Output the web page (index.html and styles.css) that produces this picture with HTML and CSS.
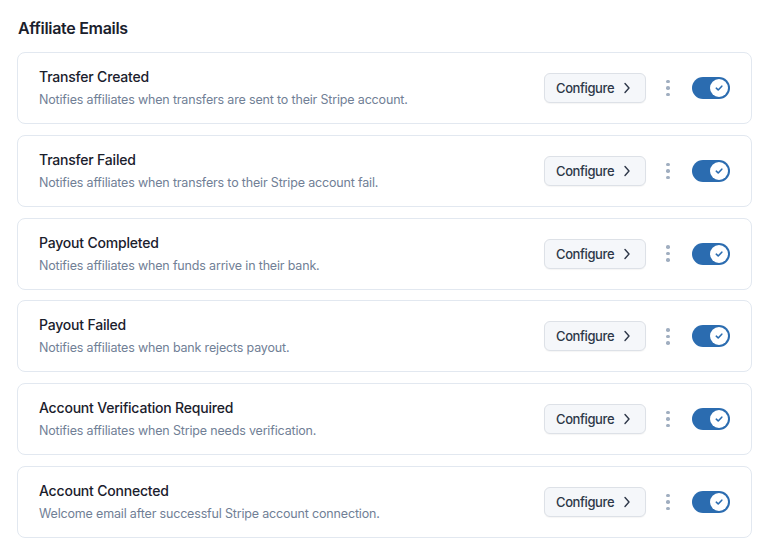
FILE: index.html
```html
<!DOCTYPE html>
<html>
<head>
<meta charset="utf-8">
<link rel="stylesheet" href="styles.css">
</head>
<body>
<div class="page">
  <h2 class="heading">Affiliate Emails</h2>
  <div class="list">
    <div class="card">
      <div class="info">
        <div class="title">Transfer Created</div>
        <div class="desc">Notifies affiliates when transfers are sent to their Stripe account.</div>
      </div>
      <div class="actions">
        <button class="btn"><span>Configure</span><svg class="chev" viewBox="0 0 8 12"><path d="M2 1.5 6 6 2 10.5" fill="none" stroke="currentColor" stroke-width="1.4" stroke-linecap="round" stroke-linejoin="round"/></svg></button>
        <span class="kebab"><i></i><i></i><i></i></span>
        <span class="toggle"><span class="knob"><svg viewBox="0 0 12 12"><path d="M3.3 6.2 5.2 8 8.8 4.2" fill="none" stroke="currentColor" stroke-width="1.6" stroke-linecap="round" stroke-linejoin="round"/></svg></span></span>
      </div>
    </div>
    <div class="card">
      <div class="info">
        <div class="title">Transfer Failed</div>
        <div class="desc">Notifies affiliates when transfers to their Stripe account fail.</div>
      </div>
      <div class="actions">
        <button class="btn"><span>Configure</span><svg class="chev" viewBox="0 0 8 12"><path d="M2 1.5 6 6 2 10.5" fill="none" stroke="currentColor" stroke-width="1.4" stroke-linecap="round" stroke-linejoin="round"/></svg></button>
        <span class="kebab"><i></i><i></i><i></i></span>
        <span class="toggle"><span class="knob"><svg viewBox="0 0 12 12"><path d="M3.3 6.2 5.2 8 8.8 4.2" fill="none" stroke="currentColor" stroke-width="1.6" stroke-linecap="round" stroke-linejoin="round"/></svg></span></span>
      </div>
    </div>
    <div class="card">
      <div class="info">
        <div class="title">Payout Completed</div>
        <div class="desc">Notifies affiliates when funds arrive in their bank.</div>
      </div>
      <div class="actions">
        <button class="btn"><span>Configure</span><svg class="chev" viewBox="0 0 8 12"><path d="M2 1.5 6 6 2 10.5" fill="none" stroke="currentColor" stroke-width="1.4" stroke-linecap="round" stroke-linejoin="round"/></svg></button>
        <span class="kebab"><i></i><i></i><i></i></span>
        <span class="toggle"><span class="knob"><svg viewBox="0 0 12 12"><path d="M3.3 6.2 5.2 8 8.8 4.2" fill="none" stroke="currentColor" stroke-width="1.6" stroke-linecap="round" stroke-linejoin="round"/></svg></span></span>
      </div>
    </div>
    <div class="card">
      <div class="info">
        <div class="title">Payout Failed</div>
        <div class="desc">Notifies affiliates when bank rejects payout.</div>
      </div>
      <div class="actions">
        <button class="btn"><span>Configure</span><svg class="chev" viewBox="0 0 8 12"><path d="M2 1.5 6 6 2 10.5" fill="none" stroke="currentColor" stroke-width="1.4" stroke-linecap="round" stroke-linejoin="round"/></svg></button>
        <span class="kebab"><i></i><i></i><i></i></span>
        <span class="toggle"><span class="knob"><svg viewBox="0 0 12 12"><path d="M3.3 6.2 5.2 8 8.8 4.2" fill="none" stroke="currentColor" stroke-width="1.6" stroke-linecap="round" stroke-linejoin="round"/></svg></span></span>
      </div>
    </div>
    <div class="card">
      <div class="info">
        <div class="title">Account Verification Required</div>
        <div class="desc">Notifies affiliates when Stripe needs verification.</div>
      </div>
      <div class="actions">
        <button class="btn"><span>Configure</span><svg class="chev" viewBox="0 0 8 12"><path d="M2 1.5 6 6 2 10.5" fill="none" stroke="currentColor" stroke-width="1.4" stroke-linecap="round" stroke-linejoin="round"/></svg></button>
        <span class="kebab"><i></i><i></i><i></i></span>
        <span class="toggle"><span class="knob"><svg viewBox="0 0 12 12"><path d="M3.3 6.2 5.2 8 8.8 4.2" fill="none" stroke="currentColor" stroke-width="1.6" stroke-linecap="round" stroke-linejoin="round"/></svg></span></span>
      </div>
    </div>
    <div class="card">
      <div class="info">
        <div class="title">Account Connected</div>
        <div class="desc">Welcome email after successful Stripe account connection.</div>
      </div>
      <div class="actions">
        <button class="btn"><span>Configure</span><svg class="chev" viewBox="0 0 8 12"><path d="M2 1.5 6 6 2 10.5" fill="none" stroke="currentColor" stroke-width="1.4" stroke-linecap="round" stroke-linejoin="round"/></svg></button>
        <span class="kebab"><i></i><i></i><i></i></span>
        <span class="toggle"><span class="knob"><svg viewBox="0 0 12 12"><path d="M3.3 6.2 5.2 8 8.8 4.2" fill="none" stroke="currentColor" stroke-width="1.6" stroke-linecap="round" stroke-linejoin="round"/></svg></span></span>
      </div>
    </div>
  </div>
</div>
</body>
</html>
```
FILE: styles.css
```css
* { box-sizing: border-box; }
html, body { margin: 0; padding: 0; background: #ffffff; }
body { font-family: Inter, "Noto Sans", sans-serif; color: #1a202c; }
.page { padding: 16px 15px 0 17px; }
.heading { margin: 0 0 12px 1px; font-size: 16px; line-height: 24px; font-weight: 600; letter-spacing: -0.3px; color: #1a202c; }
.list { display: flex; flex-direction: column; gap: 10.8px; }
.card {
  display: flex; align-items: center; justify-content: space-between;
  border: 1px solid #e2e8f0; border-radius: 8px;
  padding: 14px 21px 14px 21px; background: #fff;
}
.info { display: flex; flex-direction: column; gap: 4px; }
.title { font-size: 14px; line-height: 20px; font-weight: 500; letter-spacing: -0.2px; color: #1a202c; }
.desc { font-size: 12.5px; line-height: 18px; letter-spacing: -0.17px; color: #718096; }
.actions { display: flex; align-items: center; }
.btn {
  display: flex; align-items: center; gap: 9px;
  width: 102px; height: 30px; padding: 0 0 0 11px;
  background: #f5f7fa; border: 1px solid #dde1e7; border-radius: 6px;
  font-family: Inter, "Noto Sans", sans-serif; font-size: 13px; font-weight: 500; letter-spacing: -0.4px; color: #2d3748;
  box-shadow: 0 1px 1px rgba(0,0,0,0.04);
}
.chev { width: 8px; height: 12px; color: #2d3748; }
.kebab {
  width: 24px; margin: 0 12px 0 10px;
  display: flex; flex-direction: column; align-items: center; gap: 3px;
}
.kebab i { width: 3.5px; height: 3.5px; border-radius: 50%; background: #a0aec0; display: block; }
.toggle {
  width: 38px; height: 22px; border-radius: 11px; background: #2b6cb0;
  display: flex; align-items: center; justify-content: flex-end; padding: 2px;
}
.knob {
  width: 18px; height: 18px; border-radius: 50%; background: #fff;
  display: flex; align-items: center; justify-content: center; color: #2b6cb0;
}
.knob svg { width: 12px; height: 12px; }
```
